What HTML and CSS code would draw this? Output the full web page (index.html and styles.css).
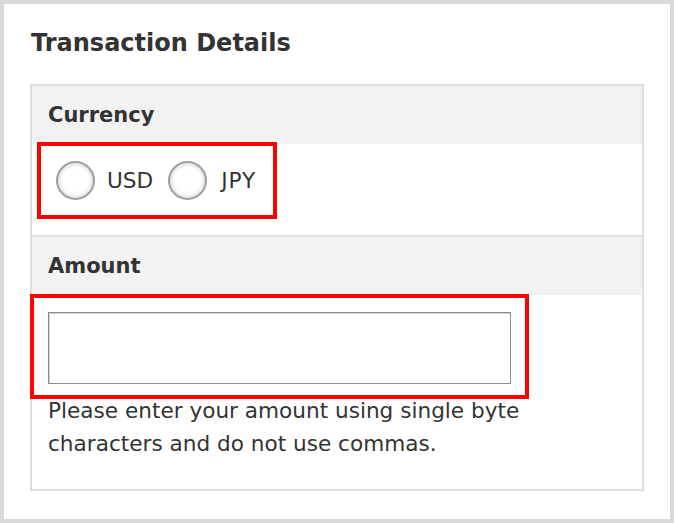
FILE: index.html
```html
<!DOCTYPE html>
<html>
<head>
    <title>Transaction Details</title>
    <link rel="stylesheet" href="styles.css">
</head>
<body>
    <div class="frame">
        <h1>Transaction Details</h1>
        <div class="panel">
            <div class="panel-head">Currency</div>
            <div class="panel-body currency-body">
                <div class="choices">
                    <label class="choice"><input type="radio" name="currency" value="USD"> USD</label>
                    <label class="choice"><input type="radio" name="currency" value="JPY"> JPY</label>
                </div>
            </div>
            <div class="panel-head">Amount</div>
            <div class="panel-body amount-body">
                <div class="amount-box">
                    <input type="text" id="amount" class="amount-input">
                </div>
                <p class="help">Please enter your amount using single byte characters and do not use commas.</p>
            </div>
        </div>
    </div>
</body>
</html>
```

FILE: styles.css
```css
html, body {
    margin: 0;
    padding: 0;
    background: #fff;
}
body {
    font-family: "DejaVu Sans", Verdana, sans-serif;
    color: #333;
}
.frame {
    height: 523px;
    box-sizing: border-box;
    border: 4px solid #d9d9d9;
    padding: 22px 26px 0 26px;
}
h1 {
    margin: 0 0 24px 1px;
    font-size: 24px;
    line-height: 34px;
    font-weight: bold;
    color: #333;
}
.panel {
    border: 2px solid #dedede;
}
.panel-head {
    background-color: #f2f2f2;
    height: 58px;
    display: flex;
    align-items: center;
    padding: 0 16px;
    font-size: 21px;
    font-weight: bold;
}
.currency-body {
    height: 91px;
    border-bottom: 2px solid #e2e2e2;
}
.choices {
    display: inline-flex;
    align-items: center;
    border: 4px solid #ff0000;
    margin: -2px 0 0 5px;
    padding: 15px 17px 15px 15px;
    font-size: 21.6px;
}
.choice {
    display: flex;
    align-items: center;
    gap: 12px;
    margin-right: 15px;
    cursor: pointer;
}
.choice:last-child {
    margin-right: 0;
    gap: 14px;
    letter-spacing: 1px;
}
.choice input[type="radio"] {
    appearance: none;
    -webkit-appearance: none;
    margin: 0;
    width: 39px;
    height: 39px;
    box-sizing: border-box;
    border-radius: 50%;
    border: 2px solid #a0a0a0;
    background: radial-gradient(circle at 50% 40%, #ffffff 50%, #e4e4e4 100%);
    box-shadow: inset 0 1px 4px rgba(0, 0, 0, 0.2);
}
.amount-body {
    padding: 0 16px 29px 0;
}
.amount-box {
    width: 499px;
    box-sizing: border-box;
    border: 4px solid #ff0000;
    margin: -1px 0 0 -2px;
    padding: 14px 14px 11px 14px;
}
.amount-input {
    display: block;
    width: 463px;
    height: 72px;
    box-sizing: border-box;
    border: 1px solid #8c8c8c;
    box-shadow: inset 1px 1px 0 #d0d0d0;
    font-size: 21px;
    padding: 0 10px;
    outline: none;
}
.help {
    margin: -5px 0 0 16px;
    max-width: 500px;
    font-size: 21.6px;
    line-height: 33px;
}
```
